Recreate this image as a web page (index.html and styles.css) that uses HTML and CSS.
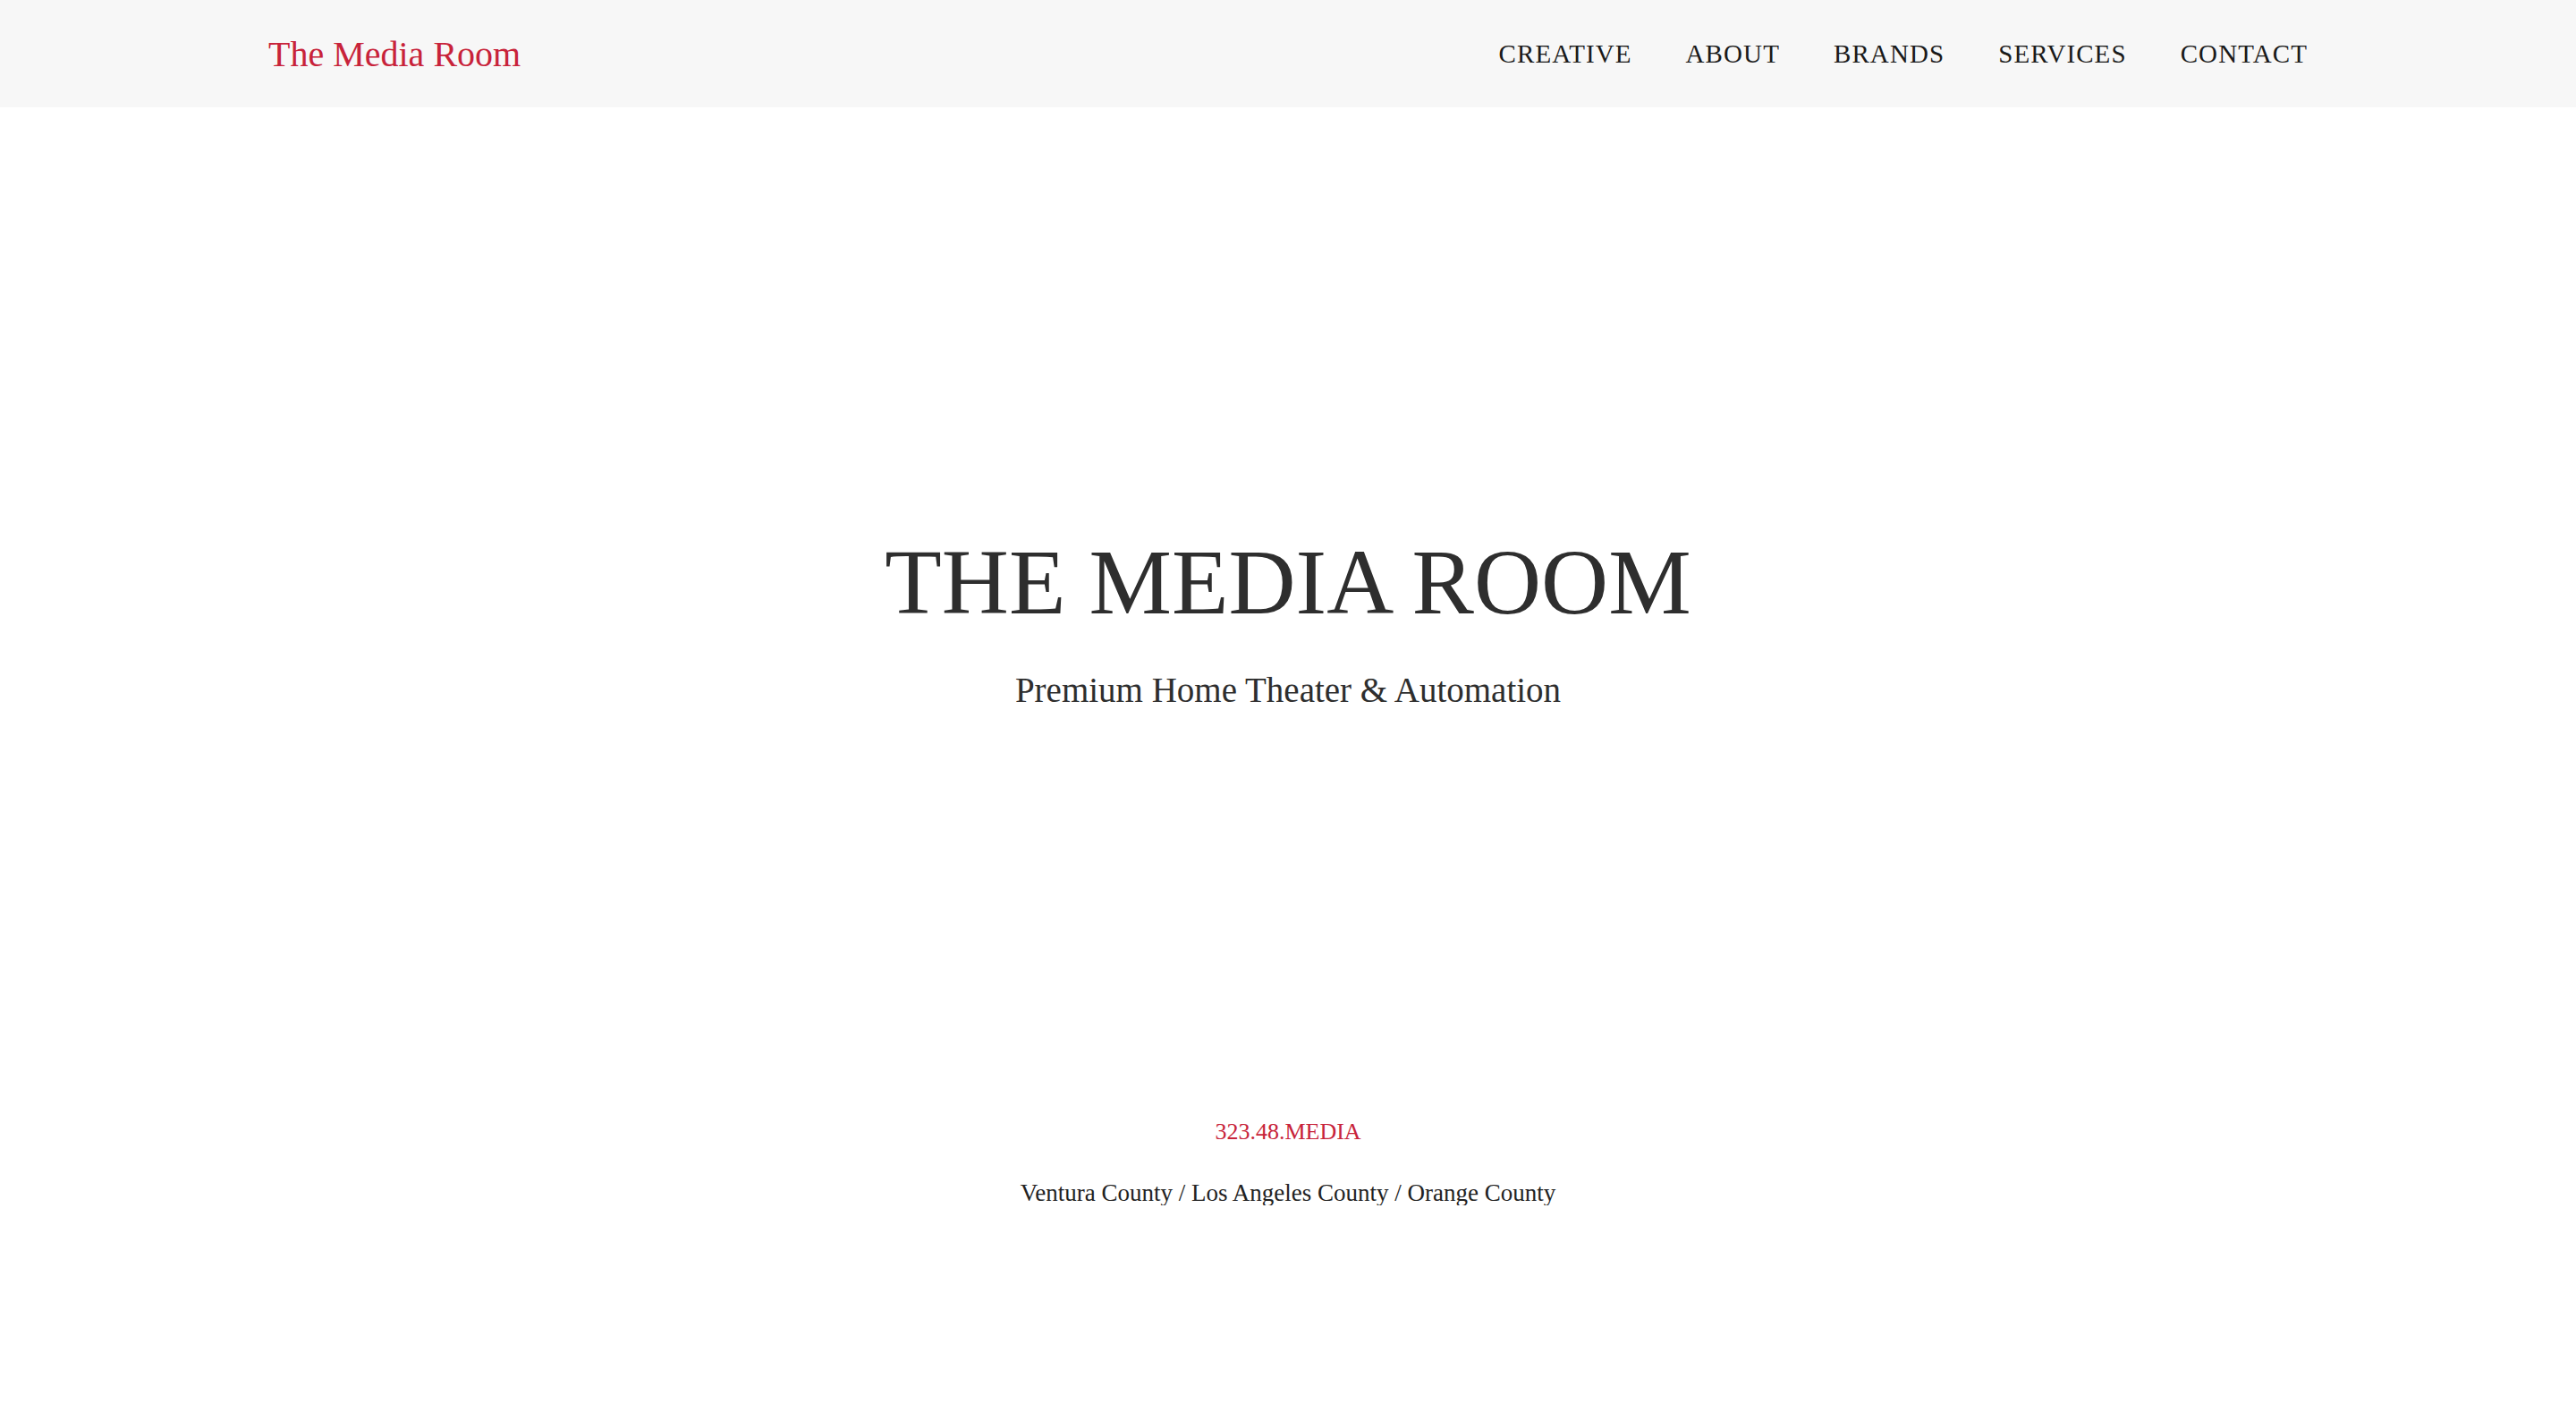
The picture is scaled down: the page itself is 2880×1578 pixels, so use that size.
FILE: index.html
```html
<!DOCTYPE html>
<html lang="en">
<head>
<meta charset="utf-8">
<title>The Media Room</title>
<link rel="stylesheet" href="styles.css">
</head>
<body>
<header class="site-header">
  <div class="header-inner">
    <a class="logo" href="#">The Media Room</a>
    <nav class="main-nav">
      <a href="#">CREATIVE</a>
      <a href="#">ABOUT</a>
      <a href="#">BRANDS</a>
      <a href="#">SERVICES</a>
      <a href="#">CONTACT</a>
    </nav>
  </div>
</header>
<main class="hero">
  <h1 class="hero-title">THE MEDIA ROOM</h1>
  <p class="hero-sub">Premium Home Theater &amp; Automation</p>
</main>
<section class="contact">
  <a class="phone" href="#">323.48.MEDIA</a>
  <p class="areas">Ventura County / Los Angeles County / Orange County</p>
</section>
</body>
</html>
```

FILE: styles.css
```css
html, body {
  margin: 0;
  padding: 0;
  background: #ffffff;
}
body {
  font-family: "Liberation Serif", "DejaVu Serif", serif;
  color: #333;
}
a {
  text-decoration: none;
}
.site-header {
  height: 120px;
  background: #f7f7f7;
}
.header-inner {
  height: 100%;
  padding: 0 300px;
  display: flex;
  align-items: center;
  justify-content: space-between;
}
.logo {
  color: #c8233a;
  font-size: 40px;
  line-height: 1;
  margin-top: 2px;
}
.main-nav {
  display: flex;
  gap: 60px;
}
.main-nav a {
  color: #1a1a1a;
  font-size: 29px;
  letter-spacing: 1.1px;
  line-height: 1;
}
.hero {
  display: flex;
  flex-direction: column;
  align-items: center;
  padding-top: 479px;
}
.hero-title {
  margin: 0;
  font-weight: normal;
  font-size: 104px;
  letter-spacing: 0;
  line-height: 1;
  color: #2e2e2e;
}
.hero-sub {
  margin: 49px 0 0;
  font-size: 39px;
  line-height: 1;
  color: #2e2e2e;
}
.contact {
  display: flex;
  flex-direction: column;
  align-items: center;
  padding-top: 462px;
}
.phone {
  color: #c8233a;
  font-size: 26px;
  line-height: 1;
}
.areas {
  margin: 42px 0 0;
  font-size: 27px;
  line-height: 1;
  color: #222;
}
```
